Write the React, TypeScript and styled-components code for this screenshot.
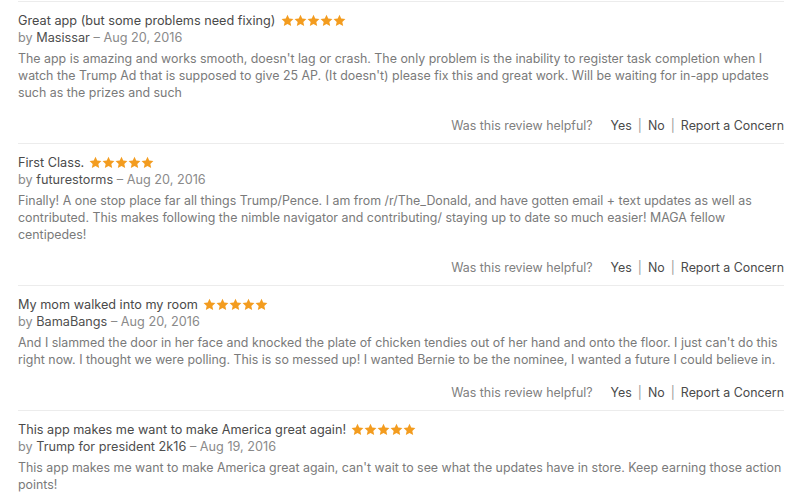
import styled, { createGlobalStyle } from "styled-components";

const GlobalStyle = createGlobalStyle`
  html, body {
    margin: 0;
    padding: 0;
    background: #ffffff;
  }
  body {
    font-family: Inter, "Noto Sans", "Liberation Sans", sans-serif;
    -webkit-font-smoothing: antialiased;
  }
`;

const Page = styled.main`
  width: 800px;
  box-sizing: border-box;
  padding: 1px 16px 0 18px;
  font-size: 12.4px;
  line-height: 17px;
`;

const Review = styled.article`
  border-top: 1px solid #ececec;
  padding: 10px 0 9px;
  display: flex;
  flex-direction: column;
`;

const TitleRow = styled.div`
  display: flex;
  align-items: center;
  gap: 5px;
  font-size: 12.7px;
  color: #4a4a4a;
`;

const Stars = styled.span`
  display: inline-flex;
`;

const Byline = styled.div`
  font-size: 12.7px;
  color: #8a8a8a;
`;

const Author = styled.span`
  color: #4f4f4f;
`;

const Body = styled.p`
  margin: 4px 0 0;
  color: #7a7a7a;
`;

const Helpful = styled.div`
  margin-top: 16px;
  display: flex;
  justify-content: flex-end;
  align-items: center;
  color: #4a4a4a;
`;

const Question = styled.span`
  color: #808080;
  margin-right: 18px;
`;

const Sep = styled.span`
  color: #9a9a9a;
  margin: 0 6px;
`;

function Star() {
  return (
    <svg width="13" height="13" viewBox="0 0 24 24">
      <path
        d="M12 1.5l3.2 7 7.7.9-5.7 5.2 1.6 7.6L12 18.4l-6.8 3.8 1.6-7.6L1.1 9.4l7.7-.9z"
        fill="#f39c1f"
      />
    </svg>
  );
}

type ReviewData = {
  title: string;
  author: string;
  date: string;
  text: string;
};

const reviews: ReviewData[] = [
  {
    title: "Great app (but some problems need fixing)",
    author: "Masissar",
    date: "Aug 20, 2016",
    text: "The app is amazing and works smooth, doesn't lag or crash. The only problem is the inability to register task completion when I watch the Trump Ad that is supposed to give 25 AP. (It doesn't) please fix this and great work. Will be waiting for in-app updates such as the prizes and such",
  },
  {
    title: "First Class.",
    author: "futurestorms",
    date: "Aug 20, 2016",
    text: "Finally! A one stop place far all things Trump/Pence. I am from /r/The_Donald, and have gotten email + text updates as well as contributed. This makes following the nimble navigator and contributing/ staying up to date so much easier! MAGA fellow centipedes!",
  },
  {
    title: "My mom walked into my room",
    author: "BamaBangs",
    date: "Aug 20, 2016",
    text: "And I slammed the door in her face and knocked the plate of chicken tendies out of her hand and onto the floor. I just can't do this right now. I thought we were polling. This is so messed up! I wanted Bernie to be the nominee, I wanted a future I could believe in.",
  },
  {
    title: "This app makes me want to make America great again!",
    author: "Trump for president 2k16",
    date: "Aug 19, 2016",
    text: "This app makes me want to make America great again, can't wait to see what the updates have in store. Keep earning those action points!",
  },
];

export default function App() {
  return (
    <>
      <GlobalStyle />
      <Page>
        {reviews.map((r, i) => (
          <Review key={r.author}>
            <TitleRow>
              <span>{r.title}</span>
              <Stars>
                {[0, 1, 2, 3, 4].map((n) => (
                  <Star key={n} />
                ))}
              </Stars>
            </TitleRow>
            <Byline>
              by <Author>{r.author}</Author> – {r.date}
            </Byline>
            <Body>{r.text}</Body>
            {i < reviews.length - 1 && (
              <Helpful>
                <Question>Was this review helpful?</Question>
                <span>Yes</span>
                <Sep>|</Sep>
                <span>No</span>
                <Sep>|</Sep>
                <span>Report a Concern</span>
              </Helpful>
            )}
          </Review>
        ))}
      </Page>
    </>
  );
}
